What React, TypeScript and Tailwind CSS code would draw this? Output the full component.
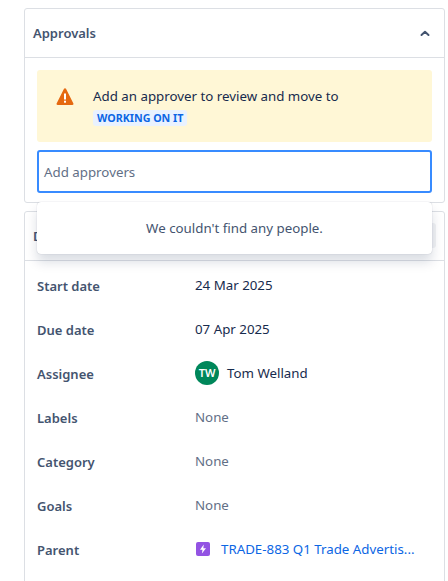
import React from 'react'

const font = "font-['Noto_Sans',sans-serif]"

function Field({ label, children }: { label: string; children: React.ReactNode }) {
  return (
    <div className="flex h-[44px] items-center">
      <div className="w-[158px] shrink-0 pb-[1px] text-[13px] font-semibold text-[#44546f]">{label}</div>
      <div className="min-w-0 flex-1 pb-[2px] text-[13.3px]">{children}</div>
    </div>
  )
}

const None = () => <span className="text-[#626f86]">None</span>

export default function App() {
  return (
    <div className={`${font} h-[581px] overflow-hidden bg-white pl-[24px] pr-[3px] pt-[8px] leading-[20px] text-[#172b4d]`}>
      <div className="relative rounded-[3px] border border-[#dcdfe4]">
        <div className="flex h-[49px] items-center justify-between border-b border-[#dcdfe4] pl-[8px] pr-[14px]">
          <h2 className="text-[13px] font-semibold text-[#44546f]">Approvals</h2>
          <svg width="10" height="7" viewBox="0 0 10 7" fill="none" stroke="#44546f" strokeWidth="2" strokeLinecap="round" strokeLinejoin="round">
            <path d="M1.5 5 5 1.800 8.500 5" />
          </svg>
        </div>
        <div className="px-[12px] pb-[9px] pt-[12px]">
          <div className="flex h-[72px] items-start rounded-[3px] bg-[#fff7d6] pl-[19px] pt-[16px]">
            <svg className="mt-[2px] shrink-0" width="18" height="17" viewBox="0 0 18 17">
              <path fill="#e56910" d="M8 .8c.4-.8 1.600-.8 2 0l7.400 14.600c.3.7-.2 1.500-1 1.500H1.600c-.8 0-1.300-.8-1-1.500z" />
              <rect x="8" y="5.500" width="2" height="6" fill="#fff" />
              <rect x="8" y="12.700" width="2" height="2" fill="#fff" />
            </svg>
            <div className="ml-[19px]">
              <p className="text-[13.3px] leading-[20px]">Add an approver to review and move to</p>
              <span className="mt-[2px] inline-block h-[16px] rounded-[3px] bg-[#e9f2ff] px-[4px] text-[10.7px] font-bold leading-[16px] text-[#0c66e4]">WORKING ON IT</span>
            </div>
          </div>
          <div className="mt-[8px] flex h-[43px] items-center rounded-[3px] border-2 border-[#388bff] pl-[5px] text-[13.3px] text-[#626f86]">Add approvers</div>
        </div>
        <div className="absolute left-[12px] right-[12px] top-[193px] z-10 flex h-[52px] items-center justify-center rounded-[4px] bg-white text-[13.3px] text-[#44546f] shadow-[0_8px_12px_rgba(9,30,66,0.15),0_0_1px_rgba(9,30,66,0.31)]">
          We couldn't find any people.
        </div>
      </div>

      <div className="mt-[8px] h-[400px] rounded-[3px] border border-[#dcdfe4]">
        <div className="flex h-[49px] items-center justify-between border-b border-[#dcdfe4] pl-[8px] pr-[8px]">
          <h2 className="text-[13px] font-semibold text-[#44546f]">Details</h2>
          <div className="mb-[1px] flex items-center gap-[2px]">
            <div className="mt-[18px] h-[6px] w-px bg-[#8590a2]" />
            <div className="ml-[24px] h-[25px] w-[8px] rounded-[3px] bg-[#f1f2f4]" />
          </div>
        </div>
        <div className="px-[12px] pt-[3px]">
          <Field label="Start date">24 Mar 2025</Field>
          <Field label="Due date">07 Apr 2025</Field>
          <Field label="Assignee">
            <div className="flex items-center">
              <span className="flex h-[24px] w-[24px] items-center justify-center rounded-full bg-[#00875a] text-[11px] font-semibold text-white">TW</span>
              <span className="ml-[8px]">Tom Welland</span>
            </div>
          </Field>
          <Field label="Labels"><None /></Field>
          <Field label="Category"><None /></Field>
          <Field label="Goals"><None /></Field>
          <Field label="Parent">
            <div className="flex items-center">
              <svg className="ml-[1px] shrink-0" width="14" height="14" viewBox="0 0 14 14">
                <rect width="14" height="14" rx="2" fill="#9353e3" />
                <path fill="#fff" d="M7.800 2.500 4 7.800h2.500L5.900 11.500 10 6.200H7.300z" />
              </svg>
              <span className="ml-[11px] whitespace-nowrap text-[#0c66e4]">TRADE-883 Q1 Trade Advertis...</span>
            </div>
          </Field>
        </div>
      </div>
    </div>
  )
}
